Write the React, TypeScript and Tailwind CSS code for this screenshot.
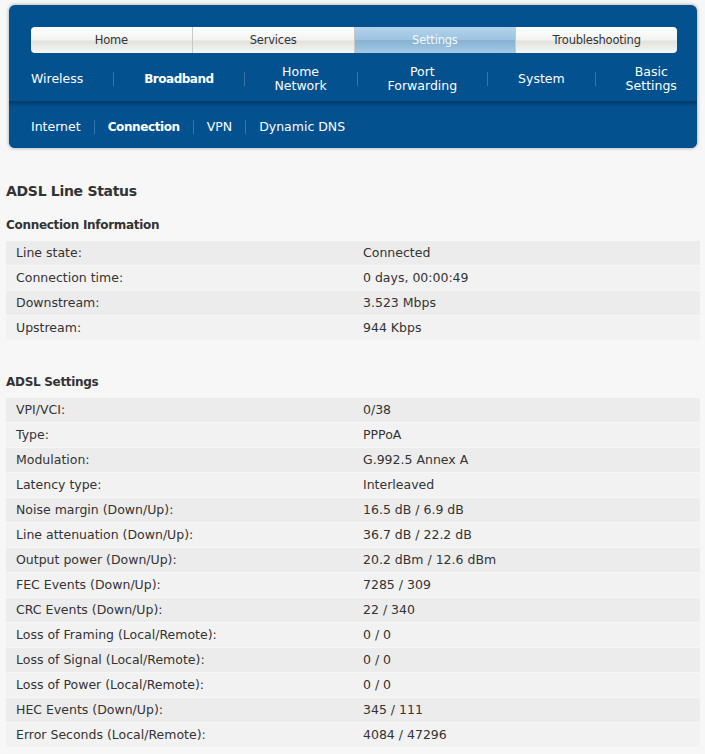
import React from "react";

const font = { fontFamily: '"DejaVu Sans", Verdana, sans-serif' };

const tabs = ["Home", "Services", "Settings", "Troubleshooting"];

const nav2: { label: string[]; bold?: boolean }[] = [
  { label: ["Wireless"] },
  { label: ["Broadband"], bold: true },
  { label: ["Home", "Network"] },
  { label: ["Port", "Forwarding"] },
  { label: ["System"] },
  { label: ["Basic", "Settings"] },
];

const nav3: { label: string; bold?: boolean }[] = [
  { label: "Internet" },
  { label: "Connection", bold: true },
  { label: "VPN" },
  { label: "Dynamic DNS" },
];

const conn: [string, string][] = [
  ["Line state:", "Connected"],
  ["Connection time:", "0 days, 00:00:49"],
  ["Downstream:", "3.523 Mbps"],
  ["Upstream:", "944 Kbps"],
];

const adsl: [string, string][] = [
  ["VPI/VCI:", "0/38"],
  ["Type:", "PPPoA"],
  ["Modulation:", "G.992.5 Annex A"],
  ["Latency type:", "Interleaved"],
  ["Noise margin (Down/Up):", "16.5 dB / 6.9 dB"],
  ["Line attenuation (Down/Up):", "36.7 dB / 22.2 dB"],
  ["Output power (Down/Up):", "20.2 dBm / 12.6 dBm"],
  ["FEC Events (Down/Up):", "7285 / 309"],
  ["CRC Events (Down/Up):", "22 / 340"],
  ["Loss of Framing (Local/Remote):", "0 / 0"],
  ["Loss of Signal (Local/Remote):", "0 / 0"],
  ["Loss of Power (Local/Remote):", "0 / 0"],
  ["HEC Events (Down/Up):", "345 / 111"],
  ["Error Seconds (Local/Remote):", "4084 / 47296"],
];

function Table({ rows }: { rows: [string, string][] }) {
  return (
    <div className="flex flex-col">
      {rows.map(([k, v], i) => (
        <div
          key={k}
          className={`flex h-[25px] items-center border-b border-[#f7f7f7] pt-[1px] text-[12.5px] text-[#333] ${
            i % 2 === 0 ? "bg-[#ececec]" : "bg-[#f2f2f2]"
          }`}
        >
          <div className="w-1/2 pl-[10px]">{k}</div>
          <div className="w-1/2 pl-[10px]">{v}</div>
        </div>
      ))}
    </div>
  );
}

export default function App() {
  return (
    <div className="min-h-[754px] w-[705px] bg-[#f7f7f7]" style={font}>
      <div className="pt-[5px] pl-[9px] pr-[8px]">
        <div className="overflow-hidden rounded-[6px] bg-[#03518f] shadow-[0_0_3px_1px_rgba(0,0,0,0.22)]">
          <div className="px-[22px] pr-[20px] pt-[22px]">
            <div className="flex h-[26px] overflow-hidden rounded-[4px]">
              {tabs.map((t, i) => {
                const active = t === "Settings";
                return (
                  <div
                    key={t}
                    className={`flex flex-1 items-center justify-center pt-[2px] text-[11.5px] tracking-[-0.2px] ${
                      i > 0 ? "border-l border-[#c9c9c6]" : ""
                    } ${
                      active
                        ? "bg-[linear-gradient(to_bottom,#b3d4ec_0%,#9dc3e0_50%,#88b2d3_52%,#a4c9e5_100%)] text-[#f4f8fb]"
                        : "bg-[linear-gradient(to_bottom,#ffffff_0%,#f3f3f1_50%,#e1e1dd_54%,#f7f7f5_100%)] text-[#333]"
                    }`}
                  >
                    {t}
                  </div>
                );
              })}
            </div>
            <div className="flex h-[48px] items-center justify-between pt-[3px] text-[12.5px] leading-[14px] text-white">
              {nav2.map((n, i) => (
                <React.Fragment key={n.label.join(" ")}>
                  {i > 0 && <div className="h-[14px] w-px bg-[#3d73a8]" />}
                  <div
                    className={`text-center ${
                      n.bold ? "text-[12px] font-bold tracking-[-0.5px]" : ""
                    }`}
                  >
                    {n.label.map((l) => (
                      <div key={l}>{l}</div>
                    ))}
                  </div>
                </React.Fragment>
              ))}
            </div>
          </div>
          <div className="flex h-[47px] items-center bg-[linear-gradient(to_bottom,#023a68_0px,#03518f_6px)] px-[22px] pt-[5px] text-[12.5px] text-white">
            {nav3.map((n, i) => (
              <React.Fragment key={n.label}>
                {i > 0 && <div className="mx-[13px] h-[14px] w-px bg-[#3d73a8]" />}
                <div
                  className={n.bold ? "text-[12px] font-bold tracking-[-0.4px]" : ""}
                >
                  {n.label}
                </div>
              </React.Fragment>
            ))}
          </div>
        </div>
      </div>

      <div className="px-[6px] pr-[5px] text-[#333]">
        <h1 className="mt-[33px] text-[14px] font-bold leading-[20px] tracking-[-0.3px]">
          ADSL Line Status
        </h1>
        <h2 className="mt-[16px] mb-[8px] text-[12px] font-bold leading-[16px] tracking-[-0.3px]">
          Connection Information
        </h2>
        <Table rows={conn} />
        <h2 className="mt-[33px] mb-[8px] text-[12px] font-bold leading-[16px] tracking-[-0.3px]">
          ADSL Settings
        </h2>
        <Table rows={adsl} />
      </div>
    </div>
  );
}
